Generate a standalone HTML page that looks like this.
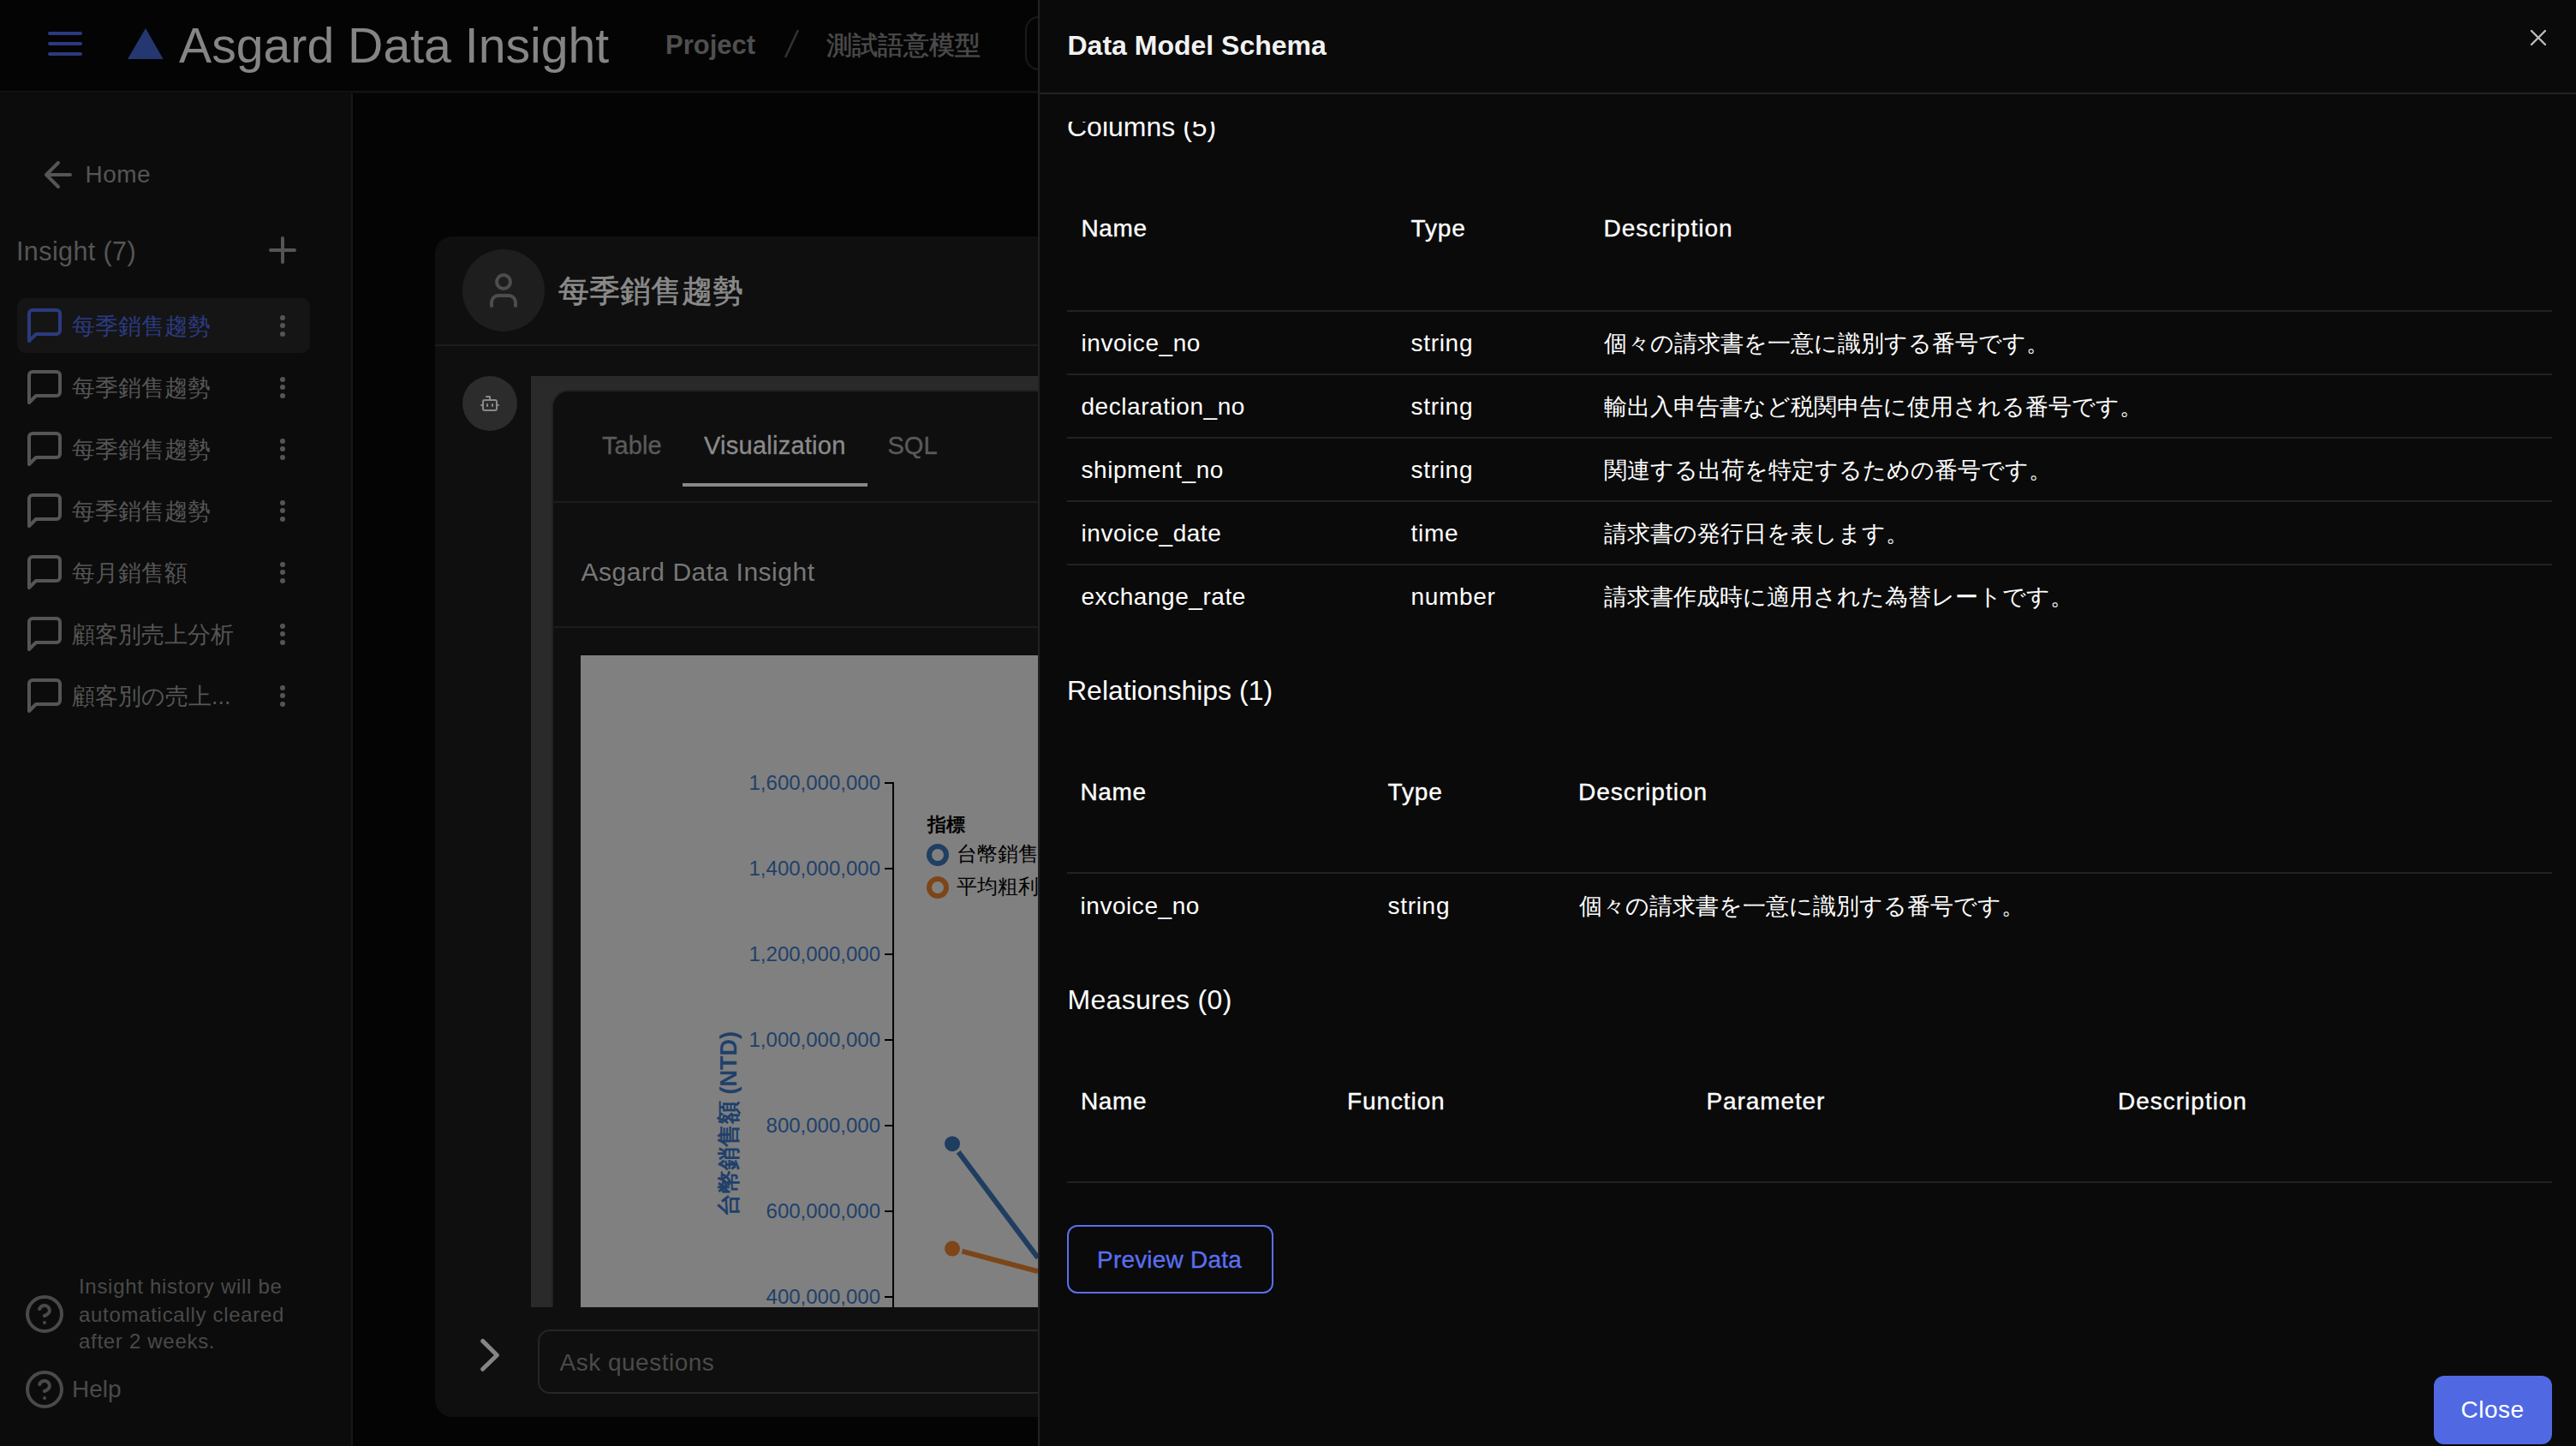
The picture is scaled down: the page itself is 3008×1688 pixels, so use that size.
<!DOCTYPE html>
<html><head><meta charset="utf-8"><style>
html,body{margin:0;padding:0;}
body{width:3008px;height:1688px;overflow:hidden;position:relative;background:#0a0a0a;font-family:"Liberation Sans", sans-serif;}
.t{position:absolute;white-space:nowrap;line-height:1;}
.r{position:absolute;box-sizing:content-box;}
</style></head><body>
<div class="r" style="left:0px;top:0px;width:1212px;height:108px;background:#040404;"></div>
<div class="r" style="left:0px;top:106px;width:1212px;height:2px;background:#121212;"></div>
<div class="r" style="left:0px;top:109px;width:410px;height:1579px;background:#0c0c0c;"></div>
<div class="r" style="left:410px;top:109px;width:2px;height:1579px;background:#171717;"></div>
<div class="r" style="left:412px;top:109px;width:800px;height:1579px;background:#040404;"></div>
<svg class="r" style="left:40px;top:20px;" width="80" height="60" viewBox="0 0 80 60"><g stroke="#2b3a80" stroke-width="4" stroke-linecap="round"><path d="M18 19H54M18 31H54M18 43H54"/></g></svg>
<svg class="r" style="left:140px;top:25px;" width="60" height="50" viewBox="0 0 60 50"><path d="M9 44 L50.6 44 L30 8 Z" fill="#243770"/></svg>
<div class="t" style="left:209.0px;top:25.1px;font-size:57.2px;color:#858585;">Asgard Data Insight</div>
<div class="t" style="left:777.0px;top:36.8px;font-size:31px;color:#4f4f4f;font-weight:700;">Project</div>
<svg class="r" style="left:910px;top:30px;" width="30" height="42" viewBox="0 0 30 42"><path d="M22 5 L7 37" stroke="#333333" stroke-width="2.5"/></svg>
<div class="t" style="left:965.0px;top:37.6px;font-size:30px;color:#4a4a4a;-webkit-text-stroke:0.6px currentColor;">測試語意模型</div>
<div class="r" style="left:1197px;top:19px;width:200px;height:59px;border:2px solid #1a1a1a;border-radius:16px;"></div>
<svg class="r" style="left:44px;top:180px" width="48" height="48" viewBox="0 0 24 24" fill="none" stroke="#555555" stroke-width="2" stroke-linecap="round" stroke-linejoin="round"><path d="M19 12H5M12 19l-7-7 7-7"/></svg>
<div class="t" style="left:99.5px;top:190.3px;font-size:28px;color:#555555;letter-spacing:0.5px;">Home</div>
<div class="t" style="left:19.0px;top:277.5px;font-size:30.5px;color:#555555;letter-spacing:0.4px;">Insight (7)</div>
<svg class="r" style="left:306px;top:268px" width="48" height="48" viewBox="0 0 24 24" fill="none" stroke="#555555" stroke-width="2" stroke-linecap="round" stroke-linejoin="round"><path d="M12 5v14M5 12h14"/></svg>
<div class="r" style="left:20px;top:348px;width:342px;height:64px;background:#151515;border-radius:10px;"></div>
<svg class="r" style="left:28px;top:356px" width="48" height="48" viewBox="0 0 24 24" fill="none" stroke="#2b3a80" stroke-width="2" stroke-linecap="round" stroke-linejoin="round"><path d="M21 15a2 2 0 0 1-2 2H7l-4 4V5a2 2 0 0 1 2-2h14a2 2 0 0 1 2 2z"/></svg>
<div class="t" style="left:84.0px;top:367.8px;font-size:26.8px;color:#2b3a80;">每季銷售趨勢</div>
<div class="r" style="left:327px;top:367.5px;width:6px;height:6px;border-radius:3px;background:#555555"></div>
<div class="r" style="left:327px;top:377.0px;width:6px;height:6px;border-radius:3px;background:#555555"></div>
<div class="r" style="left:327px;top:386.5px;width:6px;height:6px;border-radius:3px;background:#555555"></div>
<svg class="r" style="left:28px;top:428px" width="48" height="48" viewBox="0 0 24 24" fill="none" stroke="#555555" stroke-width="2" stroke-linecap="round" stroke-linejoin="round"><path d="M21 15a2 2 0 0 1-2 2H7l-4 4V5a2 2 0 0 1 2-2h14a2 2 0 0 1 2 2z"/></svg>
<div class="t" style="left:84.0px;top:439.8px;font-size:26.8px;color:#555555;">每季銷售趨勢</div>
<div class="r" style="left:327px;top:439.5px;width:6px;height:6px;border-radius:3px;background:#555555"></div>
<div class="r" style="left:327px;top:449.0px;width:6px;height:6px;border-radius:3px;background:#555555"></div>
<div class="r" style="left:327px;top:458.5px;width:6px;height:6px;border-radius:3px;background:#555555"></div>
<svg class="r" style="left:28px;top:500px" width="48" height="48" viewBox="0 0 24 24" fill="none" stroke="#555555" stroke-width="2" stroke-linecap="round" stroke-linejoin="round"><path d="M21 15a2 2 0 0 1-2 2H7l-4 4V5a2 2 0 0 1 2-2h14a2 2 0 0 1 2 2z"/></svg>
<div class="t" style="left:84.0px;top:511.8px;font-size:26.8px;color:#555555;">每季銷售趨勢</div>
<div class="r" style="left:327px;top:511.5px;width:6px;height:6px;border-radius:3px;background:#555555"></div>
<div class="r" style="left:327px;top:521.0px;width:6px;height:6px;border-radius:3px;background:#555555"></div>
<div class="r" style="left:327px;top:530.5px;width:6px;height:6px;border-radius:3px;background:#555555"></div>
<svg class="r" style="left:28px;top:572px" width="48" height="48" viewBox="0 0 24 24" fill="none" stroke="#555555" stroke-width="2" stroke-linecap="round" stroke-linejoin="round"><path d="M21 15a2 2 0 0 1-2 2H7l-4 4V5a2 2 0 0 1 2-2h14a2 2 0 0 1 2 2z"/></svg>
<div class="t" style="left:84.0px;top:583.8px;font-size:26.8px;color:#555555;">每季銷售趨勢</div>
<div class="r" style="left:327px;top:583.5px;width:6px;height:6px;border-radius:3px;background:#555555"></div>
<div class="r" style="left:327px;top:593.0px;width:6px;height:6px;border-radius:3px;background:#555555"></div>
<div class="r" style="left:327px;top:602.5px;width:6px;height:6px;border-radius:3px;background:#555555"></div>
<svg class="r" style="left:28px;top:644px" width="48" height="48" viewBox="0 0 24 24" fill="none" stroke="#555555" stroke-width="2" stroke-linecap="round" stroke-linejoin="round"><path d="M21 15a2 2 0 0 1-2 2H7l-4 4V5a2 2 0 0 1 2-2h14a2 2 0 0 1 2 2z"/></svg>
<div class="t" style="left:84.0px;top:655.8px;font-size:26.8px;color:#555555;">每月銷售額</div>
<div class="r" style="left:327px;top:655.5px;width:6px;height:6px;border-radius:3px;background:#555555"></div>
<div class="r" style="left:327px;top:665.0px;width:6px;height:6px;border-radius:3px;background:#555555"></div>
<div class="r" style="left:327px;top:674.5px;width:6px;height:6px;border-radius:3px;background:#555555"></div>
<svg class="r" style="left:28px;top:716px" width="48" height="48" viewBox="0 0 24 24" fill="none" stroke="#555555" stroke-width="2" stroke-linecap="round" stroke-linejoin="round"><path d="M21 15a2 2 0 0 1-2 2H7l-4 4V5a2 2 0 0 1 2-2h14a2 2 0 0 1 2 2z"/></svg>
<div class="t" style="left:84.0px;top:727.8px;font-size:26.8px;color:#555555;">顧客別売上分析</div>
<div class="r" style="left:327px;top:727.5px;width:6px;height:6px;border-radius:3px;background:#555555"></div>
<div class="r" style="left:327px;top:737.0px;width:6px;height:6px;border-radius:3px;background:#555555"></div>
<div class="r" style="left:327px;top:746.5px;width:6px;height:6px;border-radius:3px;background:#555555"></div>
<svg class="r" style="left:28px;top:788px" width="48" height="48" viewBox="0 0 24 24" fill="none" stroke="#555555" stroke-width="2" stroke-linecap="round" stroke-linejoin="round"><path d="M21 15a2 2 0 0 1-2 2H7l-4 4V5a2 2 0 0 1 2-2h14a2 2 0 0 1 2 2z"/></svg>
<div class="t" style="left:84.0px;top:799.8px;font-size:26.8px;color:#555555;">顧客別の売上...</div>
<div class="r" style="left:327px;top:799.5px;width:6px;height:6px;border-radius:3px;background:#555555"></div>
<div class="r" style="left:327px;top:809.0px;width:6px;height:6px;border-radius:3px;background:#555555"></div>
<div class="r" style="left:327px;top:818.5px;width:6px;height:6px;border-radius:3px;background:#555555"></div>
<svg class="r" style="left:28px;top:1510px" width="48" height="48" viewBox="0 0 24 24" fill="none" stroke="#4a4a4a" stroke-width="2" stroke-linecap="round" stroke-linejoin="round"><circle cx="12" cy="12" r="10"/><path d="M9.09 9a3 3 0 0 1 5.83 1c0 2-3 3-3 3"/><path d="M12 17h.01"/></svg>
<div class="t" style="left:92.0px;top:1490.3px;font-size:24px;color:#4a4a4a;letter-spacing:0.7px;">Insight history will be</div>
<div class="t" style="left:92.0px;top:1522.7px;font-size:24px;color:#4a4a4a;letter-spacing:0.7px;">automatically cleared</div>
<div class="t" style="left:92.0px;top:1554.3px;font-size:24px;color:#4a4a4a;letter-spacing:0.7px;">after 2 weeks.</div>
<svg class="r" style="left:28px;top:1598px" width="48" height="48" viewBox="0 0 24 24" fill="none" stroke="#4a4a4a" stroke-width="2" stroke-linecap="round" stroke-linejoin="round"><circle cx="12" cy="12" r="10"/><path d="M9.09 9a3 3 0 0 1 5.83 1c0 2-3 3-3 3"/><path d="M12 17h.01"/></svg>
<div class="t" style="left:84.0px;top:1608.3px;font-size:28px;color:#4a4a4a;">Help</div>
<div class="r" style="left:508px;top:276px;width:760px;height:1378px;background:#0f0f0f;border-radius:20px;"></div>
<div class="r" style="left:540px;top:291px;width:96px;height:96px;border-radius:48px;background:#1e1e1e"></div>
<svg class="r" style="left:564px;top:315px;" width="48" height="48" viewBox="0 0 48 48"><g fill="none" stroke="#4d4d4d" stroke-width="4" stroke-linecap="round" stroke-linejoin="round"><circle cx="24" cy="14" r="8"/><path d="M10 42v-4a8 8 0 0 1 8-8h12a8 8 0 0 1 8 8v4"/></g></svg>
<div class="t" style="left:652.0px;top:321.5px;font-size:36px;color:#8a8a8a;-webkit-text-stroke:0.6px currentColor;">每季銷售趨勢</div>
<div class="r" style="left:508px;top:402px;width:704px;height:2px;background:#1c1c1c;"></div>
<div class="r" style="left:540px;top:439px;width:64px;height:64px;border-radius:32px;background:#2c2c2c"></div>
<svg class="r" style="left:560px;top:459px" width="24" height="24" viewBox="0 0 24 24" fill="none" stroke="#8a8a8a" stroke-width="2" stroke-linecap="round" stroke-linejoin="round"><path d="M12 8V4H8"/><rect width="16" height="12" x="4" y="8" rx="2"/><path d="M2 14h2"/><path d="M20 14h2"/><path d="M15 13v2"/><path d="M9 13v2"/></svg>
<div class="r" style="left:620px;top:439px;width:600px;height:1087px;background:#2a2a2a;"></div>
<div class="r" style="left:644px;top:455px;width:600px;height:1071px;background:#0f0f0f;border-top:2px solid #222;border-left:2px solid #222;border-top-left-radius:20px;box-sizing:border-box"></div>
<div class="t" style="left:703.0px;top:506.4px;font-size:29px;color:#5a5a5a;letter-spacing:0.1px;-webkit-text-stroke:0.35px currentColor;">Table</div>
<div class="t" style="left:822.0px;top:506.4px;font-size:29px;color:#8a8a8a;letter-spacing:0.25px;-webkit-text-stroke:0.35px currentColor;">Visualization</div>
<div class="t" style="left:1036.5px;top:506.4px;font-size:29px;color:#5a5a5a;-webkit-text-stroke:0.35px currentColor;">SQL</div>
<div class="r" style="left:797px;top:564px;width:216px;height:4px;background:#888888;"></div>
<div class="r" style="left:645px;top:585px;width:580px;height:2px;background:#1c1c1c;"></div>
<div class="t" style="left:678.5px;top:653.3px;font-size:30px;color:#777777;letter-spacing:0.5px;">Asgard Data Insight</div>
<div class="r" style="left:645px;top:731px;width:580px;height:2px;background:#1c1c1c;"></div>
<div class="r" style="left:678px;top:765px;width:540px;height:761px;background:#808080;"></div>
<div class="t" style="left:700px;width:328px;text-align:right;top:902.0px;font-size:24px;line-height:24px;color:#20406a">1,600,000,000</div>
<div class="r" style="left:1033px;top:913px;width:10px;height:2px;background:#000;"></div>
<div class="t" style="left:700px;width:328px;text-align:right;top:1002.0px;font-size:24px;line-height:24px;color:#20406a">1,400,000,000</div>
<div class="r" style="left:1033px;top:1013px;width:10px;height:2px;background:#000;"></div>
<div class="t" style="left:700px;width:328px;text-align:right;top:1102.0px;font-size:24px;line-height:24px;color:#20406a">1,200,000,000</div>
<div class="r" style="left:1033px;top:1113px;width:10px;height:2px;background:#000;"></div>
<div class="t" style="left:700px;width:328px;text-align:right;top:1202.0px;font-size:24px;line-height:24px;color:#20406a">1,000,000,000</div>
<div class="r" style="left:1033px;top:1213px;width:10px;height:2px;background:#000;"></div>
<div class="t" style="left:700px;width:328px;text-align:right;top:1302.0px;font-size:24px;line-height:24px;color:#20406a">800,000,000</div>
<div class="r" style="left:1033px;top:1313px;width:10px;height:2px;background:#000;"></div>
<div class="t" style="left:700px;width:328px;text-align:right;top:1402.0px;font-size:24px;line-height:24px;color:#20406a">600,000,000</div>
<div class="r" style="left:1033px;top:1413px;width:10px;height:2px;background:#000;"></div>
<div class="t" style="left:700px;width:328px;text-align:right;top:1502.0px;font-size:24px;line-height:24px;color:#20406a">400,000,000</div>
<div class="r" style="left:1033px;top:1513px;width:10px;height:2px;background:#000;"></div>
<div class="r" style="left:1042px;top:913px;width:2px;height:613px;background:#000;"></div>
<div class="t" style="left:851px;top:1312px;transform:translate(-50%,-50%) rotate(-90deg);font-size:27px;line-height:27px;font-weight:700;color:#20406a">台幣銷售額 (NTD)</div>
<div class="t" style="left:1083.0px;top:952.4px;font-size:22px;color:#000;font-weight:700;">指標</div>
<div class="r" style="left:1082px;top:984.6px;width:14px;height:14px;border:6px solid #203f62;border-radius:50%"></div>
<div class="r" style="left:1082px;top:1023px;width:14px;height:14px;border:6px solid #7d4518;border-radius:50%"></div>
<div class="t" style="left:1117.0px;top:986.1px;font-size:23.5px;color:#000;">台幣銷售</div>
<div class="t" style="left:1117.0px;top:1024.1px;font-size:23.5px;color:#000;">平均粗利</div>
<svg class="r" style="left:1044px;top:1300px;" width="170" height="226" viewBox="0 0 170 226"><path d="M68 35.2 L168 168.4" stroke="#1f3d60" stroke-width="6"/><path d="M68 157.6 L168 184.2" stroke="#7d4518" stroke-width="6"/><circle cx="68" cy="35.2" r="10.5" fill="#1f3d60" stroke="#808080" stroke-width="3"/><circle cx="68" cy="157.6" r="10.5" fill="#7d4518" stroke="#808080" stroke-width="3"/></svg>
<svg class="r" style="left:550px;top:1550px;" width="50" height="64" viewBox="0 0 50 64"><path d="M13.6 15.4 L30.4 32 L13.6 48.3" fill="none" stroke="#858585" stroke-width="5" stroke-linecap="round" stroke-linejoin="round"/></svg>
<div class="r" style="left:628px;top:1552px;width:700px;height:71px;border:2px solid #262626;border-radius:14px;"></div>
<div class="t" style="left:653.5px;top:1576.7px;font-size:28px;color:#4a4a4a;letter-spacing:0.5px;">Ask questions</div>
<div class="r" style="left:1212px;top:0px;width:2px;height:1688px;background:#222222;"></div>
<div class="r" style="left:1214px;top:0px;width:1794px;height:1688px;background:#0a0a0a;"></div>
<div class="t" style="left:1246.5px;top:36.9px;font-size:32px;color:#f2f2f2;font-weight:700;">Data Model Schema</div>
<svg class="r" style="left:2945px;top:25px;" width="38" height="38" viewBox="0 0 38 38"><path d="M11 11 L27 27 M27 11 L11 27" stroke="#bdbdbd" stroke-width="2.4" stroke-linecap="round"/></svg>
<div class="r" style="left:1214px;top:108px;width:1794px;height:2px;background:#222222;"></div>
<div class="r" style="left:1214px;top:142px;width:1794px;height:1546px;overflow:hidden">
<div class="t" style="left:32.0px;top:-9.7px;font-size:32px;color:#ffffff;">Columns (5)</div>
<div class="t" style="left:48.5px;top:111.3px;font-size:28px;color:#ffffff;letter-spacing:0.6px;-webkit-text-stroke:0.35px currentColor;">Name</div>
<div class="t" style="left:433.5px;top:111.3px;font-size:28px;color:#ffffff;letter-spacing:0.9px;-webkit-text-stroke:0.35px currentColor;">Type</div>
<div class="t" style="left:658.5px;top:111.3px;font-size:28px;color:#ffffff;letter-spacing:1.0px;-webkit-text-stroke:0.35px currentColor;">Description</div>
<div class="r" style="left:32px;top:220px;width:1734px;height:2px;background:#222222;"></div>
<div class="r" style="left:32px;top:294px;width:1734px;height:2px;background:#222222;"></div>
<div class="r" style="left:32px;top:368px;width:1734px;height:2px;background:#222222;"></div>
<div class="r" style="left:32px;top:442px;width:1734px;height:2px;background:#222222;"></div>
<div class="r" style="left:32px;top:516px;width:1734px;height:2px;background:#222222;"></div>
<div class="t" style="left:48.5px;top:244.9px;font-size:28px;color:#ffffff;letter-spacing:0.55px;">invoice_no</div>
<div class="t" style="left:433.5px;top:244.9px;font-size:28px;color:#ffffff;letter-spacing:0.7px;">string</div>
<div class="t" style="left:659.0px;top:246.4px;font-size:26.8px;color:#ffffff;">個々の請求書を一意に識別する番号です。</div>
<div class="t" style="left:48.5px;top:318.9px;font-size:28px;color:#ffffff;letter-spacing:0.55px;">declaration_no</div>
<div class="t" style="left:433.5px;top:318.9px;font-size:28px;color:#ffffff;letter-spacing:0.7px;">string</div>
<div class="t" style="left:659.0px;top:320.4px;font-size:26.8px;color:#ffffff;">輸出入申告書など税関申告に使用される番号です。</div>
<div class="t" style="left:48.5px;top:392.9px;font-size:28px;color:#ffffff;letter-spacing:0.55px;">shipment_no</div>
<div class="t" style="left:433.5px;top:392.9px;font-size:28px;color:#ffffff;letter-spacing:0.7px;">string</div>
<div class="t" style="left:659.0px;top:394.4px;font-size:26.8px;color:#ffffff;">関連する出荷を特定するための番号です。</div>
<div class="t" style="left:48.5px;top:466.9px;font-size:28px;color:#ffffff;letter-spacing:0.55px;">invoice_date</div>
<div class="t" style="left:433.5px;top:466.9px;font-size:28px;color:#ffffff;letter-spacing:0.7px;">time</div>
<div class="t" style="left:659.0px;top:468.4px;font-size:26.8px;color:#ffffff;">請求書の発行日を表します。</div>
<div class="t" style="left:48.5px;top:540.9px;font-size:28px;color:#ffffff;letter-spacing:0.55px;">exchange_rate</div>
<div class="t" style="left:433.5px;top:540.9px;font-size:28px;color:#ffffff;letter-spacing:0.7px;">number</div>
<div class="t" style="left:659.0px;top:542.4px;font-size:26.8px;color:#ffffff;">請求書作成時に適用された為替レートです。</div>
<div class="t" style="left:32.0px;top:647.7px;font-size:32px;color:#ffffff;">Relationships (1)</div>
<div class="t" style="left:47.5px;top:769.0px;font-size:28px;color:#ffffff;letter-spacing:0.6px;-webkit-text-stroke:0.35px currentColor;">Name</div>
<div class="t" style="left:406.5px;top:769.0px;font-size:28px;color:#ffffff;letter-spacing:0.9px;-webkit-text-stroke:0.35px currentColor;">Type</div>
<div class="t" style="left:629.0px;top:769.0px;font-size:28px;color:#ffffff;letter-spacing:1.0px;-webkit-text-stroke:0.35px currentColor;">Description</div>
<div class="r" style="left:32px;top:876.4px;width:1734px;height:2px;background:#222222;"></div>
<div class="t" style="left:47.5px;top:901.7px;font-size:28px;color:#ffffff;letter-spacing:0.55px;">invoice_no</div>
<div class="t" style="left:406.5px;top:901.7px;font-size:28px;color:#ffffff;letter-spacing:0.7px;">string</div>
<div class="t" style="left:630.0px;top:903.2px;font-size:26.8px;color:#ffffff;">個々の請求書を一意に識別する番号です。</div>
<div class="t" style="left:32.5px;top:1008.7px;font-size:32px;color:#ffffff;letter-spacing:0.3px;">Measures (0)</div>
<div class="t" style="left:48.0px;top:1130.3px;font-size:28px;color:#ffffff;letter-spacing:0.6px;-webkit-text-stroke:0.35px currentColor;">Name</div>
<div class="t" style="left:359.0px;top:1130.3px;font-size:28px;color:#ffffff;letter-spacing:0.9px;-webkit-text-stroke:0.35px currentColor;">Function</div>
<div class="t" style="left:778.5px;top:1130.3px;font-size:28px;color:#ffffff;letter-spacing:0.9px;-webkit-text-stroke:0.35px currentColor;">Parameter</div>
<div class="t" style="left:1259.0px;top:1130.3px;font-size:28px;color:#ffffff;letter-spacing:1.0px;-webkit-text-stroke:0.35px currentColor;">Description</div>
<div class="r" style="left:32px;top:1237.4px;width:1734px;height:2px;background:#222222;"></div>
<div class="r" style="left:32px;top:1288px;width:237px;height:76px;border:2px solid #5a6ff0;border-radius:12px"></div>
<div class="t" style="left:67.0px;top:1314.6px;font-size:28px;color:#5a6ff0;letter-spacing:0.2px;-webkit-text-stroke:0.35px currentColor;">Preview Data</div>
</div>
<div class="r" style="left:2842px;top:1606px;width:138px;height:80px;background:#5069e3;border-radius:12px;"></div>
<div class="t" style="left:2873.5px;top:1632.3px;font-size:28px;color:#ffffff;letter-spacing:0.5px;">Close</div>
</body></html>
